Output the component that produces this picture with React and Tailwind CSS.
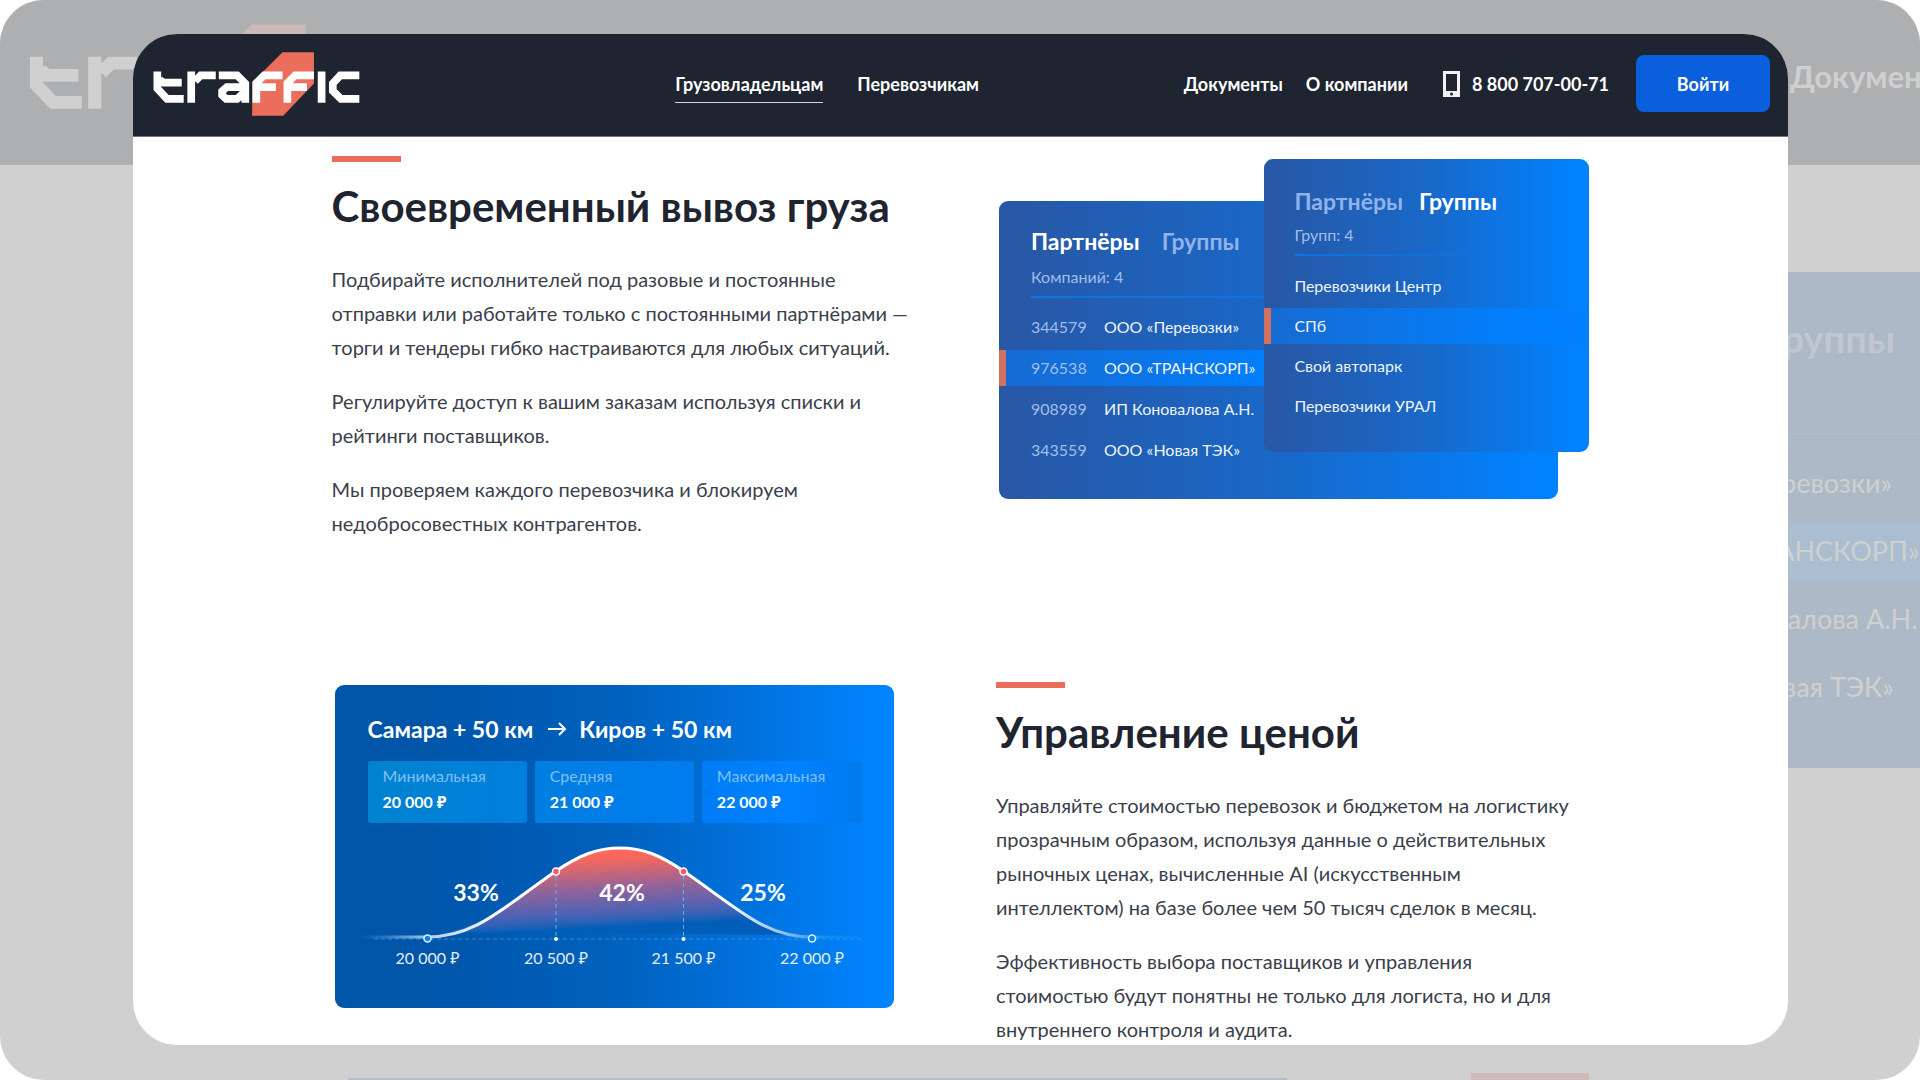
import React from "react";

function Logo({ className, markClass, letterClass }) {
  return (
    <svg
      viewBox="460 155 620 193"
      preserveAspectRatio="none"
      className={className}
      role="img"
      aria-label="traffic"
    >
      <path className={markClass} d="M757 247 848 156H942V250L850 347H757Z" />
      <g className={letterClass} fill="none" strokeWidth="23">
        <path d="M473 214V265L502 296.500H552M480 238 491 247.500H546" />
        <path d="M574.500 214V308M586 243 603 225.500H648" />
        <path d="M657 225.500H712L736.500 250V308M728 261H681L667 273V285L679 296.500H712L730 279" />
        <path d="M769.500 308V249L793 225.500H848M778 261H828" />
        <path d="M862.500 308V249L886 225.500H942M871 261H921" />
        <path d="M965 214V308" />
        <path d="M1078 225.500H1021L998.500 250V272L1023 296.500H1078" />
      </g>
    </svg>
  );
}

function PhoneIcon() {
  return (
    <svg viewBox="0 0 17 26" className="h-[26px] w-[17px]" aria-hidden="true">
      <path
        fillRule="evenodd"
        fill="#f1f1f4"
        d="M0 0H17V26H0ZM3 3V20H14V3ZM8.500 21.500A1.500 1.500 0 1 0 8.500 24.500A1.500 1.500 0 1 0 8.500 21.500Z"
      />
    </svg>
  );
}

function Backdrop() {
  const rows = ["ООО «Перевозки»", "ООО «ТРАНСКОРП»", "ИП Коновалова А.Н.", "ООО «Новая ТЭК»"];
  return (
    <div
      aria-hidden="true"
      className="absolute inset-0 flex flex-col overflow-hidden rounded-[44px] bg-[#d0d0d0] whitespace-nowrap"
    >
      <div className="flex h-[165px] shrink-0 items-start justify-between bg-[#aeafb1] pt-6 pl-[29px]">
        <Logo className="h-[107px] w-[356px]" markClass="fill-[#cdb9b7]" letterClass="stroke-[#d0d0d0]" />
        <span className="mt-7 w-[130px] text-[31px] leading-[48px] font-bold text-[#cfcfd0]">Документы</span>
      </div>
      <div className="mt-[107px] ml-auto h-[496px] w-[434px] shrink-0 bg-[#aeb9c7] pt-[42px] text-[27px] text-[#d0d0ce]">
        <div className="flex justify-end pr-[25px] text-[38px] leading-[48px] font-bold text-[#c2c6d0]">Группы</div>
        <div className="mt-[71px] h-[2px] bg-[#abbdd0]" />
        <ul className="mt-[14px]">
          {rows.map((name, i) => (
            <li key={name} className="flex h-[68px] items-center">
              <span className={`flex h-[58px] w-full items-center pl-[178px] ${i === 1 ? "bg-[#aabdd1]" : ""}`}>
                {name}
              </span>
            </li>
          ))}
        </ul>
      </div>
      <div className="mt-auto flex h-[7px] shrink-0 items-end pl-[348px]">
        <div className="h-[2px] w-[939px] bg-[#b5bdc9]" />
        <div className="ml-[184px] h-[7px] w-[118px] bg-[#d0b9b8]" />
      </div>
    </div>
  );
}

function Header() {
  return (
    <header className="flex h-[103px] shrink-0 items-center border-b border-[#77727f] bg-[#1e2430] pr-[18px] pb-[3px] pl-5 text-[18px] leading-6 font-bold whitespace-nowrap text-white">
      <a href="#home" className="block">
        <Logo className="h-16 w-[207px]" markClass="fill-[#eb6e5c]" letterClass="stroke-white" />
      </a>
      <nav className="ml-[19.5%] flex items-center gap-[34px]">
        <a href="#owners" className="relative">
          Грузовладельцам
          <span className="absolute inset-x-0 -bottom-[7px] h-px bg-[#d5d3da]" />
        </a>
        <a href="#carriers">Перевозчикам</a>
      </nav>
      <div className="ml-auto flex items-center">
        <a href="#docs">Документы</a>
        <a href="#about" className="ml-[23px]">О компании</a>
        <a href="tel:88007070071" className="ml-[35px] flex items-center gap-3">
          <PhoneIcon />
          <span>8 800 707-00-71</span>
        </a>
        <button type="button" className="ml-[27px] h-[57px] w-[134px] rounded-lg bg-[#0a5fdc] font-bold">
          Войти
        </button>
      </div>
    </header>
  );
}

function Article({ title, paragraphs }) {
  return (
    <article className="whitespace-nowrap">
      <div className="h-[6px] w-[69px] bg-[#eb6e5c]" />
      <h2 className="mt-[19px] text-[42px] leading-[50px] font-bold text-[#1e2430]">{title}</h2>
      <div className="mt-[31px] flex flex-col gap-5 text-[20px] leading-[34px] text-[#3a404b]">
        {paragraphs.map((lines) => (
          <p key={lines[0]}>
            {lines.map((line) => (
              <span key={line} className="block">{line}</span>
            ))}
          </p>
        ))}
      </div>
    </article>
  );
}

const partners = [
  ["344579", "ООО «Перевозки»"],
  ["976538", "ООО «ТРАНСКОРП»"],
  ["908989", "ИП Коновалова А.Н."],
  ["343559", "ООО «Новая ТЭК»"],
];
const groups = ["Перевозчики Центр", "СПб", "Свой автопарк", "Перевозчики УРАЛ"];

function PartnersPreview() {
  return (
    <div className="relative mt-[3px] h-[340px] text-[16px] whitespace-nowrap text-[#eef3fb]">
      <section className="absolute top-[42px] right-[31px] left-[3px] h-[298px] overflow-hidden rounded-[9px] bg-[linear-gradient(90deg,#2857a5,#1968c8_50%,#0082ff_97%)] pt-6">
        <div className="pl-8">
          <h3 className="flex gap-[22px] text-[23px] leading-8 font-bold">
            <span className="text-white">Партнёры</span>
            <span className="text-[#8fb3ea]">Группы</span>
          </h3>
          <p className="mt-2 leading-6 text-[#a0beec]">Компаний: 4</p>
          <div className="mt-[7px] mr-8 h-[2px] bg-[linear-gradient(90deg,#0d74e2,#0d74e2_40%,transparent)]" />
        </div>
        <ul className="mt-2">
          {partners.map(([id, name], i) => (
            <li key={id} className="flex h-[41px] items-center">
              <div
                className={
                  i === 1
                    ? "flex h-9 w-full items-center border-l-[7px] border-[#d3705f] bg-[linear-gradient(90deg,#166bd3,#0080ff_50%)] pl-[25px]"
                    : "flex h-9 w-full items-center pl-8"
                }
              >
                <span className="w-[73px] text-[#a0beec]">{id}</span>
                <span>{name}</span>
              </div>
            </li>
          ))}
        </ul>
      </section>
      <section className="absolute top-0 right-0 h-[293px] w-[325px] overflow-hidden rounded-[9px] bg-[linear-gradient(90deg,#2857a5,#1968c8_50%,#0082ff_97%)] pt-[26px]">
        <div className="pl-[30px]">
          <h3 className="flex gap-4 text-[23px] leading-8 font-bold">
            <span className="text-[#8fb3ea]">Партнёры</span>
            <span className="text-white">Группы</span>
          </h3>
          <p className="mt-[6px] leading-6 text-[#a0beec]">Групп: 4</p>
          <div className="mt-[7px] mr-8 h-[2px] bg-[linear-gradient(90deg,#0d74e2,transparent)]" />
        </div>
        <ul className="mt-[10px]">
          {groups.map((name, i) => (
            <li key={name} className="flex h-10 items-center">
              <div
                className={
                  i === 1
                    ? "flex h-9 w-full items-center border-l-[7px] border-[#d3705f] bg-[linear-gradient(90deg,#166bd3,#0080ff_80%)] pl-[23px]"
                    : "flex h-9 w-full items-center pl-[30px]"
                }
              >
                {name}
              </div>
            </li>
          ))}
        </ul>
      </section>
    </div>
  );
}

const tiles = [
  ["Минимальная", "20 000 ₽", "bg-[linear-gradient(90deg,#0083cf,#007edd)]"],
  ["Средняя", "21 000 ₽", "bg-[linear-gradient(90deg,#007ee0,#007cf0)]"],
  ["Максимальная", "22 000 ₽", "bg-[linear-gradient(90deg,#007df5,#0081ff_60%,#0079ec)]"],
];

function PriceChart() {
  const ticks = [[427.5, "20 000 ₽"], [556, "20 500 ₽"], [683.5, "21 500 ₽"], [812, "22 000 ₽"]];
  const shares = [[476, "33%"], [622, "42%"], [763, "25%"]];
  return (
    <svg viewBox="358 840 514 135" className="-mx-[10px] mt-[17px] block h-[135px] text-[16px]" role="img" aria-label="Распределение цен">
      <defs>
        <linearGradient id="area" gradientUnits="userSpaceOnUse" x1="620" y1="848" x2="624" y2="927">
          <stop offset="0" stopColor="#ff6a5c" />
          <stop offset="0.15" stopColor="#f0675f" />
          <stop offset="0.5" stopColor="#93639a" />
          <stop offset="0.8" stopColor="#4f62b4" />
          <stop offset="0.9" stopColor="#2f62b6" />
          <stop offset="1" stopColor="#005eb9" />
        </linearGradient>
        <linearGradient id="curve" gradientUnits="userSpaceOnUse" x1="358" y1="0" x2="865" y2="0">
          <stop offset="0" stopColor="#3fa0e0" stopOpacity="0" />
          <stop offset="0.14" stopColor="#b4cdea" />
          <stop offset="0.28" stopColor="#fff" />
          <stop offset="0.72" stopColor="#fff" />
          <stop offset="0.85" stopColor="#86b8ea" />
          <stop offset="0.92" stopColor="#1490ee" />
          <stop offset="1" stopColor="#0f90ff" stopOpacity="0" />
        </linearGradient>
      </defs>
      <path
        fill="url(#area)"
        d="M450 932C489 922 505 906 556 871C580 855 597 848 620 848C643 848 660 855 683.500 871C729 905 750 927 790 935Z"
      />
      <path d="M374 939H862" stroke="#4aa3e6" strokeOpacity="0.65" strokeDasharray="4 3" />
      <path d="M556 876V936M683.500 876V936" stroke="#5fb2f0" strokeDasharray="4 3" />
      <path
        fill="none"
        stroke="url(#curve)"
        strokeWidth="3"
        d="M358 936.900 427 937C475 937 500 910 556 871C580 855 597 848 620 848C643 848 660 855 683.500 871C740 910 765 937 812 937L865 937.100"
      />
      <g fill="#ff5468" stroke="#fff" strokeWidth="1.500">
        <circle cx="556" cy="871.500" r="3.500" />
        <circle cx="683.500" cy="871.500" r="3.500" />
      </g>
      <g fill="#0084ff" stroke="#e6f1fc" strokeWidth="1.500">
        <circle cx="427.500" cy="938.500" r="3.500" />
        <circle cx="812" cy="938.500" r="3.500" />
      </g>
      <circle cx="556" cy="939" r="2" fill="#fff" />
      <circle cx="683.500" cy="939" r="2" fill="#fff" />
      {shares.map(([x, t]) => (
        <text key={t} x={x} y="901" textAnchor="middle" className="fill-white text-[23px] font-bold">{t}</text>
      ))}
      {ticks.map(([x, t]) => (
        <text key={t} x={x} y="964" textAnchor="middle" className="fill-[#e3eefb]">{t}</text>
      ))}
    </svg>
  );
}

function PricePreview() {
  return (
    <section className="mt-[3px] mr-[31px] ml-[3px] h-[323px] rounded-[9px] bg-[linear-gradient(90deg,#0055a8_15%,#0062bf_52%,#0073df_76%,#0084ff_98%)] px-[33px] pt-7 whitespace-nowrap text-white">
      <h3 className="flex items-center text-[23px] leading-8 font-bold">
        Самара + 50 км
        <svg viewBox="0 0 20 16" className="mr-3 ml-[14px] h-4 w-5" fill="none" stroke="currentColor" strokeWidth="2" aria-hidden="true">
          <path d="M1 8H18M12 2 18 8 12 14" />
        </svg>
        Киров + 50 км
      </h3>
      <dl className="mt-4 grid grid-cols-3 gap-2">
        {tiles.map(([label, value, tone]) => (
          <div key={label} className={`h-[62px] rounded-[3px] pt-[2px] pl-[15px] text-[16px] leading-[26px] ${tone}`}>
            <dt className="text-[#7fc0f5]">{label}</dt>
            <dd className="font-bold">{value}</dd>
          </div>
        ))}
      </dl>
      <PriceChart />
    </section>
  );
}

export default function App() {
  return (
    <div className="relative flex h-screen flex-col bg-white pt-[34px] pr-[132px] pb-[35px] pl-[133px] font-['Lato','Noto_Sans',sans-serif]">
      <Backdrop />
      <div className="relative flex min-h-0 flex-1 flex-col overflow-hidden rounded-[44px] bg-white">
        <Header />
        <main className="px-[12%] pt-[19px]">
          <div className="grid grid-cols-2 gap-[71px]">
            <Article
              title="Своевременный вывоз груза"
              paragraphs={[
                [
                  "Подбирайте исполнителей под разовые и постоянные",
                  "отправки или работайте только с постоянными партнёрами —",
                  "торги и тендеры гибко настраиваются для любых ситуаций.",
                ],
                ["Регулируйте доступ к вашим заказам используя списки и", "рейтинги поставщиков."],
                ["Мы проверяем каждого перевозчика и блокируем", "недобросовестных контрагентов."],
              ]}
            />
            <PartnersPreview />
          </div>
          <div className="mt-[142px] grid grid-cols-2 gap-[71px]">
            <PricePreview />
            <Article
              title="Управление ценой"
              paragraphs={[
                [
                  "Управляйте стоимостью перевозок и бюджетом на логистику",
                  "прозрачным образом, используя данные о действительных",
                  "рыночных ценах, вычисленные AI (искусственным",
                  "интеллектом) на базе более чем 50 тысяч сделок в месяц.",
                ],
                [
                  "Эффективность выбора поставщиков и управления",
                  "стоимостью будут понятны не только для логиста, но и для",
                  "внутреннего контроля и аудита.",
                ],
              ]}
            />
          </div>
        </main>
      </div>
    </div>
  );
}
